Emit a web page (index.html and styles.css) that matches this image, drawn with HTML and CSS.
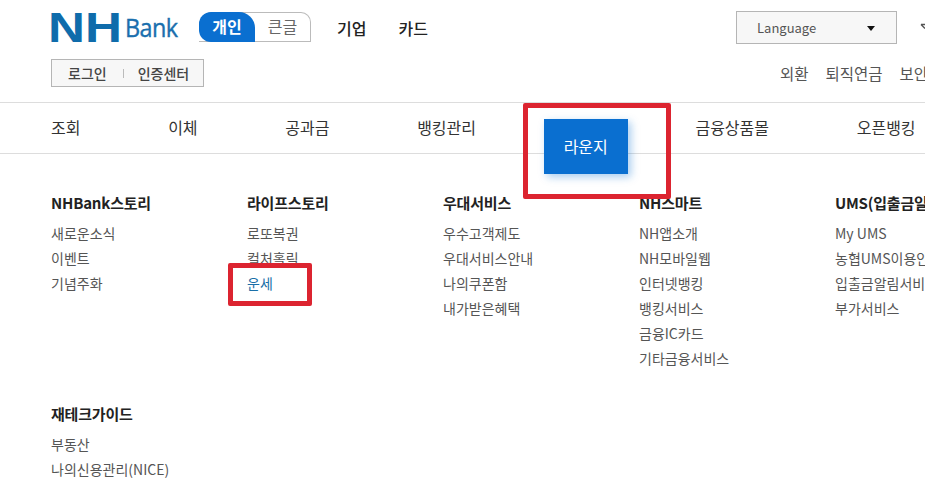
FILE: index.html
```html
<!DOCTYPE html>
<html>
<head>
  <meta charset="UTF-8">
  <title>NH Bank</title>
  <link rel="stylesheet" href="styles.css">
</head>
<body>
  <div class="page">
    <div class="top-row">
      <a class="logo"><span class="logo-nh">NH</span><span class="logo-bank">Bank</span></a>
      <div class="toggle">
        <span class="toggle-on">개인</span>
        <span class="toggle-off">큰글</span>
      </div>
      <a class="top-link first">기업</a>
      <a class="top-link">카드</a>
      <div class="lang">
        <span>Language</span>
        <i class="lang-arrow"></i>
      </div>
      <svg class="top-icon" width="12" height="12" viewBox="0 0 12 12"><path d="M1 2.5 L5 2.5 M1 2.5 L5 6.5" stroke="#555" stroke-width="1.4" fill="none"/></svg>
    </div>

    <div class="second-row">
      <div class="login-box">
        <a>로그인</a>
        <i class="login-sep"></i>
        <a>인증센터</a>
      </div>
      <div class="util-links">
        <a>외환</a>
        <a>퇴직연금</a>
        <a>보안센터</a>
      </div>
    </div>

    <nav class="gnb">
      <a>조회</a>
      <a>이체</a>
      <a>공과금</a>
      <a>뱅킹관리</a>
      <a class="gnb-active">라운지</a>
      <a>금융상품몰</a>
      <a>오픈뱅킹</a>
    </nav>

    <div class="menu">
      <div class="menu-col">
        <h4>NHBank스토리</h4>
        <a>새로운소식</a>
        <a>이벤트</a>
        <a>기념주화</a>
      </div>
      <div class="menu-col">
        <h4>라이프스토리</h4>
        <a>로또복권</a>
        <a>컬처홀릭</a>
        <a class="current">운세</a>
      </div>
      <div class="menu-col">
        <h4>우대서비스</h4>
        <a>우수고객제도</a>
        <a>우대서비스안내</a>
        <a>나의쿠폰함</a>
        <a>내가받은혜택</a>
      </div>
      <div class="menu-col">
        <h4>NH스마트</h4>
        <a>NH앱소개</a>
        <a>NH모바일웹</a>
        <a>인터넷뱅킹</a>
        <a>뱅킹서비스</a>
        <a>금융IC카드</a>
        <a>기타금융서비스</a>
      </div>
      <div class="menu-col">
        <h4>UMS(입출금일림)</h4>
        <a>My UMS</a>
        <a>농협UMS이용안내</a>
        <a>입출금알림서비스</a>
        <a>부가서비스</a>
      </div>
      <div class="menu-col">
        <h4>재테크가이드</h4>
        <a>부동산</a>
        <a>나의신용관리(NICE)</a>
      </div>
    </div>

    <div class="mark mark-lounge"></div>
    <div class="mark mark-fortune"></div>
  </div>
</body>
</html>
```

FILE: styles.css
```css
html, body {
  margin: 0;
  padding: 0;
  overflow: hidden;
  background: #fff;
}

body {
  font-family: "Noto Sans CJK KR", "Noto Sans", sans-serif;
  color: #333;
}

.page {
  position: relative;
  width: 925px;
  height: 480px;
  overflow: hidden;
}

.top-row {
  display: flex;
  align-items: center;
  height: 33px;
  margin-top: 11px;
  padding-left: 51px;
  white-space: nowrap;
}

.logo {
  display: flex;
  align-items: center;
  flex-shrink: 0;
  width: 148px;
  height: 33px;
}

.logo-nh {
  display: block;
  width: 77px;
  margin-left: -3px;
  font-family: "Liberation Sans", sans-serif;
  font-size: 42px;
  font-weight: 700;
  line-height: 33px;
  color: #0f6cab;
  transform: scaleX(1.22);
  transform-origin: left center;
}

.logo-bank {
  font-family: "Open Sans", sans-serif;
  font-size: 26px;
  line-height: 33px;
  letter-spacing: -0.6px;
  color: #1a6fae;
  transform: scaleX(0.9);
  transform-origin: left center;
  -webkit-text-stroke: 0.4px #1a6fae;
}

.toggle {
  display: flex;
  flex-shrink: 0;
  align-self: flex-start;
  width: 112px;
  height: 30px;
  margin-top: 1px;
  box-sizing: border-box;
  border: 1px solid #bbb;
  border-left: 0;
  border-radius: 14px 10px 0 0;
  font-size: 16px;
  line-height: 27px;
}

.toggle-on {
  width: 56px;
  height: 30px;
  text-align: center;
  font-weight: 700;
  color: #fff;
  background: #0a6fd0;
  border-radius: 12px 16px 0 12px;
  margin-top: -1px;
  line-height: 29px;
}

.toggle-off {
  flex: 1;
  text-align: center;
  color: #666;
}

.top-link {
  font-size: 16px;
  font-weight: 500;
  color: #222;
  margin-left: 32px;
}

.top-link.first {
  margin-left: 26px;
}

.lang {
  display: flex;
  align-items: center;
  justify-content: space-between;
  flex-shrink: 0;
  box-sizing: border-box;
  width: 161px;
  height: 33px;
  margin-left: auto;
  padding: 0 21px 0 20px;
  border: 1px solid #b5b5b5;
  background: #f7f7f7;
  font-size: 13px;
  color: #555;
}

.lang-arrow {
  width: 0;
  height: 0;
  border-left: 4px solid transparent;
  border-right: 4px solid transparent;
  border-top: 5px solid #111;
  margin-top: 2px;
}

.top-icon {
  flex-shrink: 0;
  margin: 0 -7px 0 23px;
}

.second-row {
  display: flex;
  align-items: center;
  justify-content: space-between;
  height: 28px;
  margin-top: 15px;
  padding-left: 51px;
  white-space: nowrap;
}

.login-box {
  display: flex;
  align-items: center;
  box-sizing: border-box;
  width: 153px;
  height: 28px;
  padding-left: 16px;
  border: 1px solid #b5b5b5;
  background: #f7f7f7;
  font-size: 14px;
  font-weight: 500;
  color: #444;
}

.login-sep {
  width: 1px;
  height: 9px;
  margin: 0 14px 0 16px;
  background: #bbb;
}

.util-links {
  display: flex;
  gap: 17px;
  width: 145px;
  flex-shrink: 0;
  font-size: 15.5px;
  color: #555;
}

.gnb {
  display: flex;
  align-items: center;
  gap: 87.7px;
  height: 50px;
  margin-top: 15px;
  padding-left: 51px;
  border-top: 1px solid #ddd;
  border-bottom: 1px solid #ddd;
  font-size: 16px;
  color: #333;
  white-space: nowrap;
}

.gnb a {
  position: relative;
  top: -1px;
}

.gnb .gnb-active {
  top: 18px;
  width: 84px;
  height: 55px;
  margin: 0 -20px;
  text-align: center;
  line-height: 55px;
  color: #fff;
  background: #0a6fd0;
  box-shadow: 3px 3px 8px rgba(10, 111, 208, 0.35);
}

.menu {
  display: grid;
  grid-template-columns: repeat(5, 196px);
  row-gap: 30px;
  padding: 36px 0 0 51px;
  white-space: nowrap;
}

.menu-col {
  min-height: 166px;
}

.menu-col h4 {
  margin: 0 0 6px;
  font-size: 15px;
  font-weight: 700;
  line-height: 25px;
  letter-spacing: -0.2px;
  color: #222;
}

.menu-col a {
  display: block;
  font-size: 14px;
  line-height: 25px;
  color: #555;
}

.menu-col a.current {
  color: #1a6fa8;
}

.mark {
  position: absolute;
  box-sizing: border-box;
  border: 5px solid #dc2430;
  border-radius: 2px;
}

.mark-lounge {
  left: 523px;
  top: 103px;
  width: 148px;
  height: 96px;
}

.mark-fortune {
  left: 228px;
  top: 263px;
  width: 84px;
  height: 43px;
}
```
